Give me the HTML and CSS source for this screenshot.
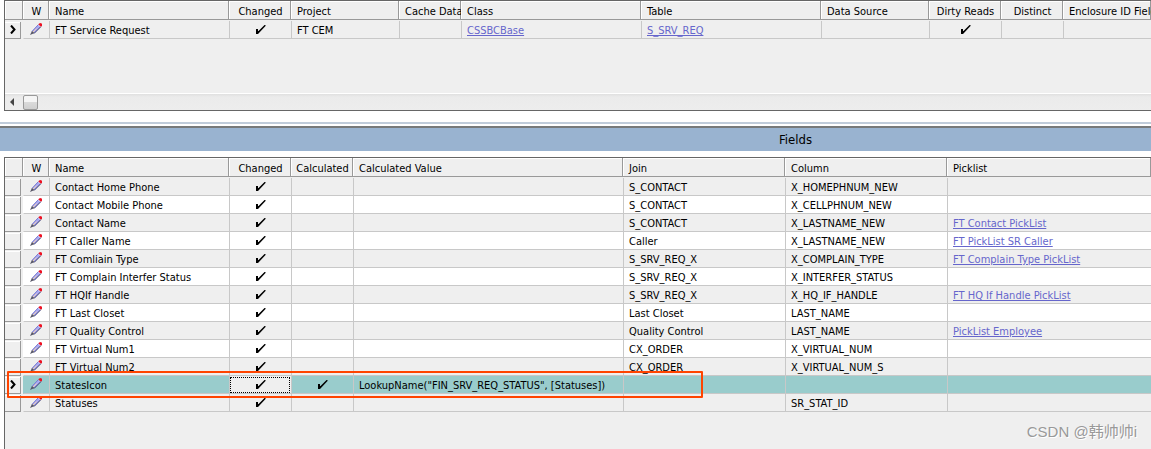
FILE: index.html
```html
<!DOCTYPE html>
<html lang="en">
<head>
    <meta charset="UTF-8">
    <meta name="viewport" content="width=device-width, initial-scale=1.0">
    <title>Fields</title>
    <link rel="stylesheet" href="styles.css">
</head>
<body>

    <svg class="sprite" aria-hidden="true">
        <symbol id="pencil" viewBox="0 0 12 12">
            <path d="M2 8 L8 2 L10.5 4 L4.5 10 Z" fill="#aaaaf5"/>
            <path d="M2 8.5 L8.5 1.5" stroke="#7777cc" fill="none"/>
            <path d="M4 10.5 L11 3.5" stroke="#333366" fill="none"/>
            <path d="M3 9 L6.5 5.5" stroke="#f0d0b0" fill="none"/>
            <path d="M9 0.5 L11 0 L12 1 V3 L10.5 3.5 L8.5 1.5 Z" fill="#ee1122"/>
            <path d="M0 12 L2 8 L4.5 10 Z" fill="#555566"/>
        </symbol>
        <symbol id="check" viewBox="0 0 10 9">
            <path d="M0 4 H2 V6 H2.5 L8.5 0 H9.5 V1 L2 9 H0 Z" fill="#000"/>
        </symbol>
        <symbol id="marker" viewBox="0 0 6 9">
            <path d="M1 0.5 L4.5 4.5 L1 8.5" stroke="#000" stroke-width="2" fill="none"/>
        </symbol>
    </svg>

    <div class="pane top-pane">
        <table class="grid">
            <colgroup>
                <col class="c-sel"><col class="c-w"><col class="c-180"><col class="c-62"><col class="c-108"><col class="c-62"><col class="c-180"><col class="c-180"><col class="c-108"><col class="c-72"><col class="c-62"><col>
            </colgroup>
            <thead>
                <tr>
                    <th></th>
                    <th class="center">W</th>
                    <th>Name</th>
                    <th class="center">Changed</th>
                    <th>Project</th>
                    <th>Cache Data</th>
                    <th>Class</th>
                    <th>Table</th>
                    <th>Data Source</th>
                    <th class="center">Dirty Reads</th>
                    <th class="center">Distinct</th>
                    <th>Enclosure ID Field</th>
                </tr>
            </thead>
            <tbody>
                <tr>
                    <td class="sel"><span class="handle"><svg class="marker"><use href="#marker"/></svg></span></td>
                    <td class="center"><svg class="pencil"><use href="#pencil"/></svg></td>
                    <td>FT Service Request</td>
                    <td class="center"><svg class="check"><use href="#check"/></svg></td>
                    <td>FT CEM</td>
                    <td></td>
                    <td><a href="#">CSSBCBase</a></td>
                    <td><a href="#">S_SRV_REQ</a></td>
                    <td></td>
                    <td class="center"><svg class="check"><use href="#check"/></svg></td>
                    <td></td>
                    <td></td>
                </tr>
            </tbody>
        </table>
        <div class="scrollbar">
            <button class="scroll-left" aria-label="Scroll left"></button>
            <div class="thumb"></div>
        </div>
    </div>

    <div class="splitter"></div>
    <h2 class="title">Fields</h2>

    <div class="pane fields-pane">
        <table class="grid">
            <colgroup>
                <col class="c-sel"><col class="c-w"><col class="c-180"><col class="c-62"><col class="c-62"><col class="c-270"><col class="c-162"><col class="c-162"><col>
            </colgroup>
            <thead>
                <tr>
                    <th></th>
                    <th class="center">W</th>
                    <th>Name</th>
                    <th class="center">Changed</th>
                    <th class="center">Calculated</th>
                    <th>Calculated Value</th>
                    <th>Join</th>
                    <th>Column</th>
                    <th>Picklist</th>
                </tr>
            </thead>
            <tbody>
                <tr>
                    <td class="sel"><span class="handle"></span></td>
                    <td class="center"><svg class="pencil"><use href="#pencil"/></svg></td>
                    <td>Contact Home Phone</td>
                    <td class="center"><svg class="check"><use href="#check"/></svg></td>
                    <td></td>
                    <td></td>
                    <td>S_CONTACT</td>
                    <td>X_HOMEPHNUM_NEW</td>
                    <td></td>
                </tr>
                <tr>
                    <td class="sel"><span class="handle"></span></td>
                    <td class="center"><svg class="pencil"><use href="#pencil"/></svg></td>
                    <td>Contact Mobile Phone</td>
                    <td class="center"><svg class="check"><use href="#check"/></svg></td>
                    <td></td>
                    <td></td>
                    <td>S_CONTACT</td>
                    <td>X_CELLPHNUM_NEW</td>
                    <td></td>
                </tr>
                <tr>
                    <td class="sel"><span class="handle"></span></td>
                    <td class="center"><svg class="pencil"><use href="#pencil"/></svg></td>
                    <td>Contact Name</td>
                    <td class="center"><svg class="check"><use href="#check"/></svg></td>
                    <td></td>
                    <td></td>
                    <td>S_CONTACT</td>
                    <td>X_LASTNAME_NEW</td>
                    <td><a href="#">FT Contact PickList</a></td>
                </tr>
                <tr>
                    <td class="sel"><span class="handle"></span></td>
                    <td class="center"><svg class="pencil"><use href="#pencil"/></svg></td>
                    <td>FT Caller Name</td>
                    <td class="center"><svg class="check"><use href="#check"/></svg></td>
                    <td></td>
                    <td></td>
                    <td>Caller</td>
                    <td>X_LASTNAME_NEW</td>
                    <td><a href="#">FT PickList SR Caller</a></td>
                </tr>
                <tr>
                    <td class="sel"><span class="handle"></span></td>
                    <td class="center"><svg class="pencil"><use href="#pencil"/></svg></td>
                    <td>FT Comliain Type</td>
                    <td class="center"><svg class="check"><use href="#check"/></svg></td>
                    <td></td>
                    <td></td>
                    <td>S_SRV_REQ_X</td>
                    <td>X_COMPLAIN_TYPE</td>
                    <td><a href="#">FT Complain Type PickList</a></td>
                </tr>
                <tr>
                    <td class="sel"><span class="handle"></span></td>
                    <td class="center"><svg class="pencil"><use href="#pencil"/></svg></td>
                    <td>FT Complain Interfer Status</td>
                    <td class="center"><svg class="check"><use href="#check"/></svg></td>
                    <td></td>
                    <td></td>
                    <td>S_SRV_REQ_X</td>
                    <td>X_INTERFER_STATUS</td>
                    <td></td>
                </tr>
                <tr>
                    <td class="sel"><span class="handle"></span></td>
                    <td class="center"><svg class="pencil"><use href="#pencil"/></svg></td>
                    <td>FT HQIf Handle</td>
                    <td class="center"><svg class="check"><use href="#check"/></svg></td>
                    <td></td>
                    <td></td>
                    <td>S_SRV_REQ_X</td>
                    <td>X_HQ_IF_HANDLE</td>
                    <td><a href="#">FT HQ If Handle PickList</a></td>
                </tr>
                <tr>
                    <td class="sel"><span class="handle"></span></td>
                    <td class="center"><svg class="pencil"><use href="#pencil"/></svg></td>
                    <td>FT Last Closet</td>
                    <td class="center"><svg class="check"><use href="#check"/></svg></td>
                    <td></td>
                    <td></td>
                    <td>Last Closet</td>
                    <td>LAST_NAME</td>
                    <td></td>
                </tr>
                <tr>
                    <td class="sel"><span class="handle"></span></td>
                    <td class="center"><svg class="pencil"><use href="#pencil"/></svg></td>
                    <td>FT Quality Control</td>
                    <td class="center"><svg class="check"><use href="#check"/></svg></td>
                    <td></td>
                    <td></td>
                    <td>Quality Control</td>
                    <td>LAST_NAME</td>
                    <td><a href="#">PickList Employee</a></td>
                </tr>
                <tr>
                    <td class="sel"><span class="handle"></span></td>
                    <td class="center"><svg class="pencil"><use href="#pencil"/></svg></td>
                    <td>FT Virtual Num1</td>
                    <td class="center"><svg class="check"><use href="#check"/></svg></td>
                    <td></td>
                    <td></td>
                    <td>CX_ORDER</td>
                    <td>X_VIRTUAL_NUM</td>
                    <td></td>
                </tr>
                <tr>
                    <td class="sel"><span class="handle"></span></td>
                    <td class="center"><svg class="pencil"><use href="#pencil"/></svg></td>
                    <td>FT Virtual Num2</td>
                    <td class="center"><svg class="check"><use href="#check"/></svg></td>
                    <td></td>
                    <td></td>
                    <td>CX_ORDER</td>
                    <td>X_VIRTUAL_NUM_S</td>
                    <td></td>
                </tr>
                <tr class="selected">
                    <td class="sel"><span class="handle"><svg class="marker"><use href="#marker"/></svg></span></td>
                    <td class="center"><svg class="pencil"><use href="#pencil"/></svg></td>
                    <td>StatesIcon</td>
                    <td class="center focused"><svg class="check"><use href="#check"/></svg></td>
                    <td class="center"><svg class="check"><use href="#check"/></svg></td>
                    <td>LookupName("FIN_SRV_REQ_STATUS", [Statuses])</td>
                    <td></td>
                    <td></td>
                    <td></td>
                </tr>
                <tr>
                    <td class="sel"><span class="handle"></span></td>
                    <td class="center"><svg class="pencil"><use href="#pencil"/></svg></td>
                    <td>Statuses</td>
                    <td class="center"><svg class="check"><use href="#check"/></svg></td>
                    <td></td>
                    <td></td>
                    <td></td>
                    <td>SR_STAT_ID</td>
                    <td></td>
                </tr>
            </tbody>
        </table>
        <div class="watermark">CSDN @韩帅帅i</div>
    </div>

</body>
</html>
```
FILE: styles.css
```css
* {
    box-sizing: border-box;
}
body {
    display: flex;
    flex-direction: column;
    min-height: 100vh;
    margin: 0;
    background-color: #fff;
    color: #000;
    font-family: Tahoma, 'DejaVu Sans Condensed', 'Noto Sans', sans-serif;
    font-size: 11px;
    line-height: 15px;
    overflow: hidden;
}
.sprite {
    display: none;
}
.pane {
    margin-left: 4px;
    border-top: 1px solid #666;
    border-left: 1px solid #666;
    background-color: #efefef;
}
.top-pane {
    border-bottom: 1px solid #666;
}
.fields-pane {
    position: relative;
    flex: 1;
}

/* grid */
.grid {
    width: 100%;
    table-layout: fixed;
    border-collapse: separate;
    border-spacing: 0;
}
.c-sel { width: 18px; }
.c-w { width: 26px; }
.c-62 { width: 62px; }
.c-72 { width: 72px; }
.c-108 { width: 108px; }
.c-162 { width: 162px; }
.c-180 { width: 180px; }
.c-270 { width: 270px; }

.grid th, .grid td {
    padding: 2px 0 0 5px;
    overflow: hidden;
    white-space: nowrap;
    text-align: left;
    font-weight: normal;
}
.grid th {
    height: 20px;
    padding-left: 6px;
    border-bottom: 1px solid #efefef;
    box-shadow: inset -1px -1px #999, inset 1px 1px #fff;
}
.grid td {
    height: 18px;
    border-left: 1px solid #c8c8c8;
    border-bottom: 1px solid #c8c8c8;
}
.grid th.center {
    padding-left: 1px;
    text-align: center;
}
.grid td.center {
    padding: 0;
    text-align: center;
}
.grid td:nth-child(2) {
    padding: 0 2px 2px 0;
    border-left-color: transparent;
}
.fields-pane tbody tr:nth-child(even) td {
    background-color: #fff;
}
.grid td.sel, .fields-pane tbody tr:nth-child(even) td.sel {
    padding: 0;
    border: none;
    background-color: #efefef;
}
.fields-pane tbody tr.selected td {
    background-color: #99cccc;
}
.fields-pane tbody tr.selected td.focused {
    background-color: #efefef;
    outline: 1px dotted #000;
    outline-offset: -2px;
}
.handle {
    display: flex;
    align-items: center;
    justify-content: center;
    width: 16px;
    height: 17px;
    border-right: 1px solid #999;
    border-bottom: 1px solid #999;
    box-shadow: inset 0 1px #fff;
}
.pencil, .check, .marker {
    display: block;
    margin: 0 auto;
}
.pencil {
    width: 12px;
    height: 12px;
}
.check {
    width: 10px;
    height: 9px;
}
.marker {
    width: 6px;
    height: 9px;
}
a {
    color: #6666cc;
}

/* red frame round the selected row */
.selected {
    position: relative;
}
.grid .selected .sel {
    overflow: visible;
}
.selected .sel::after {
    content: "";
    position: absolute;
    top: -5px;
    bottom: -4px;
    left: 2px;
    width: 692px;
    border: 2px solid #ff4400;
    border-radius: 1px;
}

/* horizontal scrollbar */
.scrollbar {
    display: flex;
    align-items: center;
    height: 17px;
    margin-top: 54px;
    border-top: 1px solid #fff;
    background: linear-gradient(#e0e0e0, #ebebeb 3px, #ededed);
}
.scroll-left {
    width: 18px;
    height: 16px;
    padding: 0 4px 0 0;
    border: none;
    background: none;
}
.scroll-left::before {
    content: "";
    display: block;
    width: 0;
    margin: 0 auto;
    border: 4px solid transparent;
    border-left: none;
    border-right-color: #444;
}
.thumb {
    width: 15px;
    height: 15px;
    border: 1px solid #999;
    border-radius: 2px;
    background: linear-gradient(#f5f5f5 45%, #dadada 50%, #d0d0d0);
}

.splitter {
    height: 6px;
    margin-top: 11px;
    border-top: 2px solid #c0ccda;
    border-bottom: 2px solid #77797a;
}
.title {
    margin: 0 0 6px;
    padding-left: 779px;
    background-color: #99b3d0;
    font-size: 13px;
    font-weight: normal;
    line-height: 23px;
}
.watermark {
    position: absolute;
    right: 14px;
    bottom: 6px;
    color: #999;
    font-family: 'Liberation Sans', 'Noto Sans CJK SC', sans-serif;
    font-size: 15px;
    line-height: 22px;
    text-shadow: 1px 1px #fff;
}
```
